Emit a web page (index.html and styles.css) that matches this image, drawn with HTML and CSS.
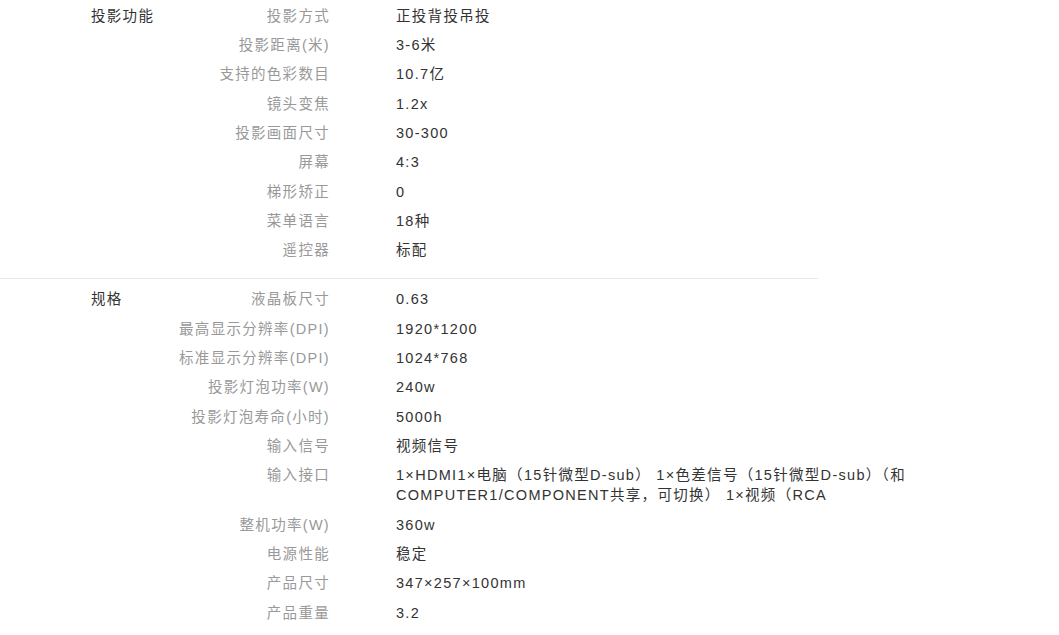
FILE: index.html
```html
<!DOCTYPE html>
<html lang="zh-CN">
<head>
    <meta charset="UTF-8">
    <meta name="viewport" content="width=device-width, initial-scale=1.0">
    <title>规格参数</title>
    <link rel="stylesheet" href="styles.css">
</head>
<body>

<div class="specs">

    <!-- 投影功能 -->
    <section class="group">
        <h3 class="group-title">投影功能</h3>
        <dl class="params">
            <div class="param"><dt>投影方式</dt><dd>正投背投吊投</dd></div>
            <div class="param"><dt>投影距离(米)</dt><dd>3-6米</dd></div>
            <div class="param"><dt>支持的色彩数目</dt><dd>10.7亿</dd></div>
            <div class="param"><dt>镜头变焦</dt><dd>1.2x</dd></div>
            <div class="param"><dt>投影画面尺寸</dt><dd>30-300</dd></div>
            <div class="param"><dt>屏幕</dt><dd>4:3</dd></div>
            <div class="param"><dt>梯形矫正</dt><dd>0</dd></div>
            <div class="param"><dt>菜单语言</dt><dd>18种</dd></div>
            <div class="param"><dt>遥控器</dt><dd>标配</dd></div>
        </dl>
    </section>

    <div class="divider"></div>

    <!-- 规格 -->
    <section class="group">
        <h3 class="group-title">规格</h3>
        <dl class="params">
            <div class="param"><dt>液晶板尺寸</dt><dd>0.63</dd></div>
            <div class="param"><dt>最高显示分辨率(DPI)</dt><dd>1920*1200</dd></div>
            <div class="param"><dt>标准显示分辨率(DPI)</dt><dd>1024*768</dd></div>
            <div class="param"><dt>投影灯泡功率(W)</dt><dd>240w</dd></div>
            <div class="param"><dt>投影灯泡寿命(小时)</dt><dd>5000h</dd></div>
            <div class="param"><dt>输入信号</dt><dd>视频信号</dd></div>
            <div class="param"><dt>输入接口</dt><dd>1×HDMI1×电脑（15针微型D-sub） 1×色差信号（15针微型D-sub）（和COMPUTER1/COMPONENT共享，可切换） 1×视频（RCA</dd></div>
            <div class="param"><dt>整机功率(W)</dt><dd>360w</dd></div>
            <div class="param"><dt>电源性能</dt><dd>稳定</dd></div>
            <div class="param"><dt>产品尺寸</dt><dd>347×257×100mm</dd></div>
            <div class="param"><dt>产品重量</dt><dd>3.2</dd></div>
        </dl>
    </section>

</div>

</body>
</html>
```

FILE: styles.css
```css
body {
    font-family: "Liberation Sans", "Noto Sans CJK SC", sans-serif;
    font-size: 14.5px;
    letter-spacing: 1.3px;
    color: #333;
    background-color: #fff;
    margin: 0;
}
.specs {
    margin-top: -5px;
}
.group {
    display: flex;
    padding: 6px 0 13px 91px;
}
.group-title {
    width: 75px;
    margin: 0;
    padding-top: 4.67px;
    font-size: 14.5px;
    font-weight: normal;
    line-height: 20px;
    color: #333;
}
.params {
    margin: 0;
}
.param {
    display: flex;
    padding: 4.67px 0;
    line-height: 20px;
}
.param dt {
    width: 164px;
    text-align: right;
    white-space: nowrap;
    color: #999;
}
.param dd {
    width: 520px;
    margin-left: 66px;
    color: #333;
}
.divider {
    width: 818px;
    height: 1px;
    background-color: #e8e8e8;
}
```
